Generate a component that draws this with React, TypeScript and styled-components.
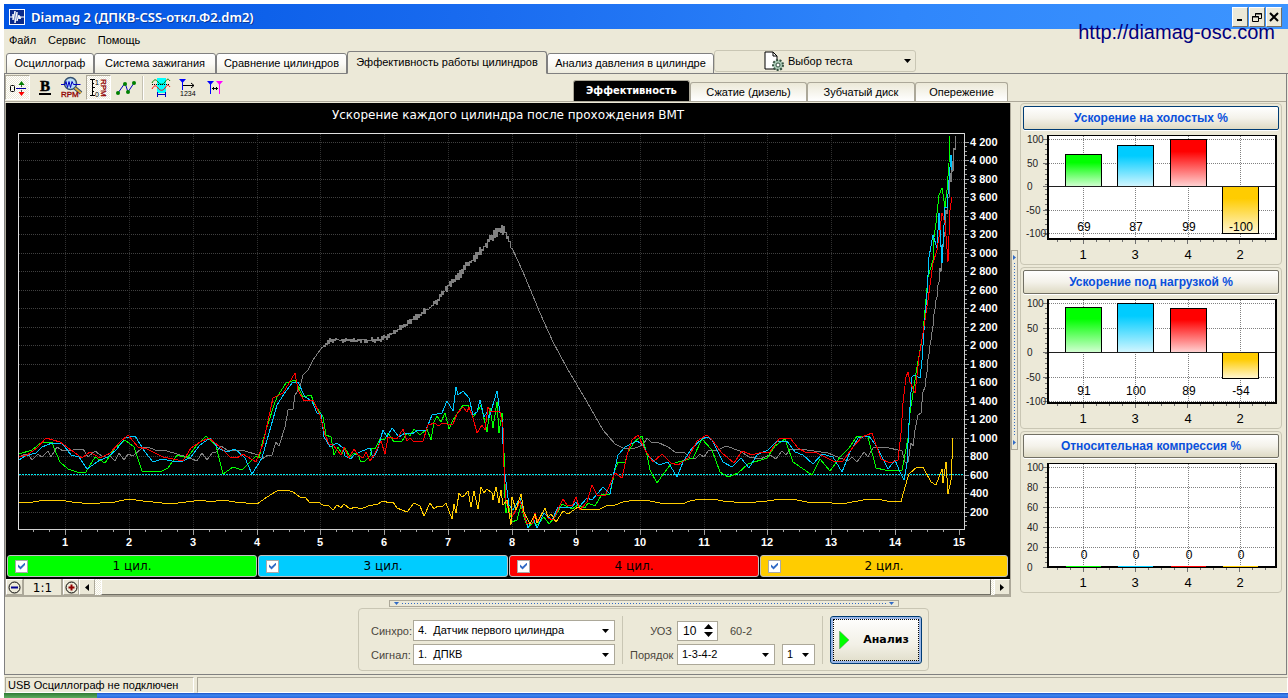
import React from "react";
import styled, { createGlobalStyle, css } from "styled-components";

const ui = `"Liberation Sans", Arial, sans-serif`;
const verdana = `"DejaVu Sans", Verdana, sans-serif`;
const face = "#ece9d8";
const edge = "#aca899";

const Global = createGlobalStyle`
  * { box-sizing: border-box; }
  body { margin: 0; background: #fff; font: 11px/14px ${ui}; color: #000; }
  button, select, input { font: inherit; color: inherit; margin: 0; padding: 0; border-radius: 0; }
`;

/* ---------- window frame ---------- */

const Frame = styled.div`
  position: relative;
  display: flex;
  flex-direction: column;
  min-height: calc(100vh - 4px);
  margin: 4px 0 0 4px;
  background: ${face};
`;

const TitleBar = styled.header`
  display: flex;
  align-items: center;
  gap: 6px;
  height: 25px;
  padding: 0 6px 0 5px;
  background: linear-gradient(90deg, #0054e3, #1a6cf0 38%, #2f86fb 70%, #3d95ff);
  color: #fff;
`;

const Caption = styled.h1`
  flex: 1;
  margin: 0;
  font: 600 13px/18px "Noto Sans", "Open Sans", sans-serif;
  text-shadow: 1px 1px 0 #0a3a9c;
`;

const WindowButtons = styled.div`
  display: flex;
  gap: 1px;
`;

const WindowButton = styled.button`
  display: grid;
  place-items: center;
  width: 16px;
  height: 20px;
  background: ${face};
  border: 1px solid;
  border-color: #fff #716f64 #716f64 #fff;
`;

const SiteLink = styled.a`
  position: absolute;
  top: 16px;
  right: 13px;
  font: 20px/24px ${ui};
  color: #000080;
  text-decoration: none;
`;

const MenuBar = styled.nav`
  display: flex;
  align-items: center;
  gap: 12px;
  height: 22px;
  padding-left: 5px;
`;

const MenuItem = styled.button`
  background: none;
  border: 0;
`;

/* ---------- tabs ---------- */

const TabRow = styled.div`
  display: flex;
  align-items: flex-end;
  height: 23px;
  padding-left: 2px;
  background: linear-gradient(#808080, #808080) bottom / 100% 1px no-repeat;
`;

const Tab = styled.button<{ $w: number; $on?: boolean }>`
  width: ${(p) => p.$w}px;
  height: ${(p) => (p.$on ? 23 : 21)}px;
  padding-bottom: 2px;
  background: ${(p) => (p.$on ? face : "linear-gradient(#fff, #fbfaf6 50%, #eceadc)")};
  border: 1px solid #808080;
  border-bottom-color: ${(p) => (p.$on ? face : "#808080")};
  border-radius: 3px 3px 0 0;
  white-space: nowrap;
`;

const TestPicker = styled.button`
  display: grid;
  grid-template-columns: 20px 1fr 8px;
  align-items: center;
  gap: 4px;
  width: 202px;
  height: 22px;
  margin-bottom: 2px;
  padding: 0 3px 0 49px;
  background: ${face};
  border: 1px solid #c9c6b4;
  border-radius: 3px;
  text-align: left;
`;

const Page = styled.main`
  flex: 1;
  display: flex;
  flex-direction: column;
  margin-right: 1px;
  border: 1px solid #808080;
  border-top: 0;
`;

const ToolStrip = styled.div`
  display: flex;
  align-items: flex-end;
  height: 28px;
  border-bottom: 1px solid ${edge};
`;

const Tools = styled.div`
  display: flex;
  align-items: center;
  gap: 2px;
  width: 568px;
  height: 27px;
`;

const ToolButton = styled.button<{ $on?: boolean }>`
  display: grid;
  place-items: center;
  width: 25px;
  height: 25px;
  border: 1px solid transparent;
  background: none;
  ${(p) =>
    p.$on &&
    css`
      background: repeating-conic-gradient(#fff 0 25%, ${face} 0 50%) 0 0 / 2px 2px;
      border-color: ${edge} #fff #fff ${edge};
    `}
`;

const ToolDivider = styled.span`
  width: 2px;
  height: 24px;
  margin: 0 2px;
  background: linear-gradient(90deg, #c5c2b2 50%, #fff 50%);
`;

const SubTab = styled.button<{ $w: number; $on?: boolean }>`
  width: ${(p) => p.$w}px;
  height: ${(p) => (p.$on ? 21 : 19)}px;
  background: ${(p) => (p.$on ? "#000" : "linear-gradient(#ece9d8, #fff)")};
  color: ${(p) => (p.$on ? "#fff" : "#000")};
  font: ${(p) => (p.$on ? `bold 11px/14px "DejaVu Sans Condensed", ${verdana}` : `11px/14px ${ui}`)};
  border: 1px solid ${edge};
  border-bottom: 0;
  border-radius: 3px 3px 0 0;
`;

/* ---------- workspace ---------- */

const Workspace = styled.div`
  display: grid;
  grid-template-columns: minmax(0, 1fr) 9px 262px;
  padding: 1px 4px 0 0;
`;

const Scope = styled.section`
  display: flex;
  flex-direction: column;
  border: solid ${edge};
  border-width: 0 1px 2px 1px;
`;

const ScopeBody = styled.div`
  background: #000;
  color: #fff;
`;

const ScopeTitle = styled.h2`
  margin: 0;
  padding: 4px 0 7px;
  font: 12px/16px ${verdana};
  text-align: center;
`;

const Plot = styled.svg`
  display: block;
  width: 100%;
  height: auto;
  font: bold 11px ${ui};
  fill: none;
`;

const Channels = styled.div`
  display: grid;
  grid-template-columns: repeat(3, 250fr) 248fr;
  gap: 1px;
  padding: 1px 2px 2px 1px;
`;

const Channel = styled.label<{ $c: string }>`
  display: grid;
  grid-template-columns: 13px 1fr 13px;
  align-items: center;
  height: 22px;
  padding: 0 7px;
  background: ${(p) => p.$c};
  border: 1px solid #c0c0c0;
  border-radius: 3px;
  color: #000;
  font: 12px/16px ${verdana};
  text-align: center;
`;

const Check = styled.input`
  appearance: none;
  display: grid;
  place-items: center;
  width: 13px;
  height: 13px;
  background: #fff;
  border: 1px solid #a9a9a9;
  &:checked::after {
    content: "";
    width: 7px;
    height: 7px;
    background: #316ac5;
    clip-path: polygon(0 28%, 36% 60%, 100% 0, 100% 36%, 36% 100%, 0 64%);
  }
`;

const ScrollRow = styled.div`
  display: flex;
  height: 16px;
`;

const RowButton = styled.button<{ $w: number }>`
  display: grid;
  place-items: center;
  width: ${(p) => p.$w}px;
  height: 16px;
  background: ${face};
  border: 1px solid;
  border-color: #fff #aca899 #aca899 #fff;
`;

const ZoomLabel = styled.output`
  width: 40px;
  padding-top: 2px;
  border-right: 2px solid ${edge};
  border-left: 1px solid ${edge};
  font: 12px/14px ${verdana};
  text-align: center;
`;

const Track = styled.div`
  flex: 1;
  padding: 0 3px 0 6px;
  background: repeating-conic-gradient(#fff 0 25%, ${face} 0 50%) 0 0 / 2px 2px;
`;

const Thumb = styled.div`
  height: 16px;
  background: ${face};
  border: 1px solid;
  border-color: #fff #716f64 #716f64 #fff;
`;

const VSplit = styled.div`
  align-self: center;
  display: flex;
  flex-direction: column;
  align-items: center;
  gap: 3px;
  width: 7px;
  height: 200px;
  padding: 4px 0;
  border: 1px solid ${edge};
`;

const HSplit = styled.div`
  display: flex;
  align-items: center;
  gap: 3px;
  width: 510px;
  height: 7px;
  padding: 0 4px;
  border: 1px solid ${edge};
`;

const DotsV = styled.span`
  flex: 1;
  width: 1px;
  background: repeating-linear-gradient(#316ac5 0 1px, transparent 1px 3px);
`;

const DotsH = styled.span`
  flex: 1;
  height: 1px;
  background: repeating-linear-gradient(90deg, #316ac5 0 1px, transparent 1px 3px);
`;

/* ---------- side charts ---------- */

const Side = styled.aside`
  display: flex;
  flex-direction: column;
  gap: 2px;
`;

const Card = styled.section`
  height: 162px;
  padding: 2px;
  border: 1px solid #c9c6b4;
  border-radius: 4px;
`;

const CardButton = styled.button<{ $active?: boolean }>`
  display: block;
  width: 100%;
  height: 24px;
  background: linear-gradient(#fff, #f4f2ea 50%, #dedac4);
  border: 1px solid ${(p) => (p.$active ? "#003c74" : "#716f64")};
  border-radius: 2px;
  box-shadow: 0 1px 0 #fff;
  color: #0a50dc;
  font: bold 12px/16px ${ui};
`;

const MiniPlot = styled.svg`
  display: block;
  width: 100%;
  height: auto;
  font-family: ${ui};
`;

/* ---------- lower panel ---------- */

const Lower = styled.div`
  flex: 1;
  display: flex;
  flex-direction: column;
  align-items: center;
  gap: 1px;
  padding: 3px 4px 3px 0;
`;

const Settings = styled.form`
  display: flex;
  gap: 7px;
  width: 571px;
  height: 63px;
  padding: 7px 0 0 12px;
  border: 1px solid #c9c6b4;
  border-radius: 4px;
`;

const Fields = styled.div<{ $cols: string }>`
  display: grid;
  grid-template-columns: ${(p) => p.$cols};
  grid-template-rows: 21px 21px;
  row-gap: 3px;
  margin-top: 4px;
`;

const FieldLabel = styled.label`
  align-self: center;
  color: #4a463c;
`;

const EndLabel = styled(FieldLabel)`
  padding-right: 5px;
  text-align: right;
`;

const Line = styled.span`
  display: flex;
  align-items: center;
  gap: 7px;
`;

const Rule = styled.span`
  width: 1px;
  height: 48px;
  background: #c9c6b4;
`;

const SelectBox = styled.span<{ $w: number }>`
  display: grid;
  width: ${(p) => p.$w}px;
  & > * { grid-area: 1 / 1; }
  & > svg { align-self: center; justify-self: end; margin-right: 6px; pointer-events: none; }
`;

const Select = styled.select`
  appearance: none;
  width: 100%;
  height: 21px;
  padding: 0 16px 2px 4px;
  background: #fff;
  border: 1px solid ${edge};
`;

const Spin = styled.span`
  display: flex;
  align-items: center;
  justify-content: space-between;
  width: 41px;
  height: 20px;
  margin-right: 5px;
  padding-right: 4px;
  background: #fff;
  border: 1px solid ${edge};
`;

const SpinInput = styled.input`
  width: 22px;
  padding-left: 5px;
  background: none;
  border: 0;
  font: 12px/14px ${ui};
`;

const Teeth = styled.span`
  color: #4a463c;
`;

const Analyse = styled.button`
  display: grid;
  grid-template-columns: 10px 1fr;
  align-items: center;
  justify-items: center;
  gap: 10px;
  width: 92px;
  height: 48px;
  padding: 0 8px;
  background: linear-gradient(#fff, #f2f0e6 60%, #e0ddc9);
  border: 1px solid #003c74;
  border-radius: 3px;
  box-shadow: inset 0 0 0 2px #9ab6e6;
  outline: 1px dotted #000;
  outline-offset: -4px;
  font: bold 11px/14px ${verdana};
`;

const StatusBar = styled.footer`
  display: flex;
  gap: 3px;
  height: 18px;
  padding: 2px 0 0 1px;
`;

const StatusCell = styled.div<{ $w?: number }>`
  flex: ${(p) => (p.$w ? `0 0 ${p.$w}px` : "1")};
  height: 16px;
  padding: 0 2px;
  border: 1px solid;
  border-color: ${edge} #fff #fff ${edge};
`;

const TaskStrip = styled.div`
  height: 5px;
  background:
    linear-gradient(#2f7a35, #5eac5f) 0 0 / 93px 100% no-repeat,
    linear-gradient(#1b50c4, #3d86ee 40%, #2a67e0);
`;

/* ---------- data ---------- */

const green =
  "19,454 32,450 42,442 52,442 54,448 60,462 68,469 77,472 86,472 95,457 105,463 115,448 125,440 134,447 142,471 160,472 168,468 177,455 187,458 197,445 206,436 216,446 223,474 233,467 242,470 256,456 259,458 263,440 274,405 277,397 286,383 295,380 303,397 311,395 315,405 323,417 326,435 331,437 334,455 338,447 342,454 345,448 350,457 354,453 358,455 361,462 365,461 370,456 372,448 375,449 380,439 385,439 388,433 394,442 402,441 407,433 410,436 414,429 420,435 427,429 431,440 434,422 437,416 441,422 445,413 449,429 453,420 457,414 463,405 468,405 473,417 477,412 481,405 487,432 490,408 493,428 497,402 499,433 502,413 504,453 504,483 506,513 508,503 512,522 517,520 521,505 524,517 528,528 533,522 537,525 544,517 549,524 555,517 562,504 572,509 578,505 585,508 588,503 595,506 602,494 610,494 615,470 618,462 625,462 628,452 635,441 642,436 647,455 650,470 657,483 664,473 671,464 693,458 702,439 712,450 720,472 728,477 738,473 748,464 767,458 775,446 785,439 793,462 812,475 820,459 830,471 840,457 849,448 857,436 868,437 876,468 885,470 902,470 904,460 908,438 910,413 915,380 917,367 923,333 925,310 928,277 933,260 934,237 936,223 939,195 942,188 945,207 947,190 949,163 950,136";
const cyan =
  "19,460 25,456 36,453 42,447 52,443 62,443 71,455 79,457 87,469 100,460 108,457 117,449 125,438 135,436 145,452 153,462 162,459 172,461 183,461 191,457 200,445 210,438 218,448 227,452 235,449 245,458 252,474 262,458 267,440 277,405 286,391 293,382 298,382 305,397 312,401 317,413 321,414 324,437 330,447 337,443 343,448 345,456 351,459 354,455 362,451 370,448 373,458 377,451 383,430 387,437 392,428 399,437 405,433 412,434 418,430 426,430 432,415 442,413 447,401 453,411 456,387 458,395 463,391 469,398 473,415 477,412 480,400 484,417 487,412 489,418 497,391 500,413 502,420 504,467 507,490 509,505 513,510 520,498 524,512 528,528 533,518 537,528 544,513 552,520 558,507 563,508 572,507 576,502 579,507 587,498 592,500 603,487 610,494 613,477 618,455 625,447 637,441 643,445 649,457 659,465 668,462 677,477 683,462 692,448 702,439 707,437 712,440 723,462 732,467 741,458 749,468 757,455 768,450 777,441 787,441 795,452 803,455 813,464 822,454 833,457 842,472 850,452 858,438 869,436 877,447 888,469 895,460 900,472 904,480 907,463 909,423 912,377 914,375 920,378 922,360 924,330 927,293 929,257 933,235 937,248 939,213 942,263 945,207 947,208 949,180 951,155 952,170";
const red =
  "19,457 27,455 37,448 46,438 60,442 82,458 90,452 100,458 110,453 120,442 128,435 138,447 147,449 163,457 183,461 191,448 200,442 209,438 220,447 230,457 237,458 243,454 256,462 263,444 273,398 283,393 295,373 298,390 304,401 313,400 320,415 325,435 329,444 333,445 341,455 344,447 349,458 354,449 358,455 363,458 366,452 370,461 374,455 381,441 385,454 388,437 397,439 403,429 407,441 410,438 413,441 423,441 428,425 435,423 438,426 443,423 447,424 453,424 457,414 463,407 467,412 469,407 473,418 477,433 482,425 485,430 488,407 490,411 500,412 503,427 504,467 506,500 509,512 512,517 517,508 520,501 527,524 533,523 535,513 538,522 545,508 548,518 553,520 563,499 567,505 572,506 576,497 580,510 587,502 592,485 597,495 605,496 615,473 622,478 627,455 632,440 638,435 645,450 653,462 662,454 671,463 678,465 688,458 697,441 707,435 713,441 722,453 734,463 742,451 752,455 762,452 770,452 779,439 790,438 798,448 807,453 815,452 835,462 843,461 853,447 862,437 872,433 881,459 890,463 898,460 901,433 903,403 906,377 908,372 910,382 915,393 919,357 923,333 928,300 933,263 937,250 940,230 942,213 945,223 948,262 950,210 952,197";
const yellow =
  "19,502 33,502 45,500 60,500 72,502 92,504 100,503 115,502 128,499 143,501 162,503 178,503 202,500 210,502 222,500 235,502 257,504 267,497 277,491 287,490 293,492 300,497 305,497 310,503 318,502 323,505 328,505 333,510 337,505 341,508 344,504 350,509 355,507 361,509 368,506 378,504 383,501 390,503 393,502 397,508 407,512 414,503 420,506 424,516 430,503 434,509 438,506 442,507 446,503 452,519 454,504 456,513 459,493 462,497 465,495 468,491 471,507 474,491 478,509 481,487 484,493 487,489 492,493 493,500 496,487 499,503 501,490 503,505 507,500 511,525 512,497 516,510 521,494 524,512 530,524 535,514 537,523 545,508 548,517 551,514 556,522 563,511 568,514 578,507 583,510 600,509 608,505 615,505 623,502 635,500 650,501 660,503 682,504 690,501 700,499 713,499 723,501 745,503 767,501 782,499 797,500 807,502 832,503 847,503 863,500 877,499 887,501 901,502 905,487 909,474 917,467 923,467 931,482 936,485 942,469 943,483 946,462 948,494 951,480 953,438";
const rpmStart =
  "19,457 25,454 28,454 32,460 38,454 42,457 48,451 51,457 57,447 63,451 83,449 88,457 95,451 103,457 108,454 115,461 119,453 124,460 128,454 133,456 142,448 148,447 155,450 167,451 187,457 197,461 202,453 207,460 213,452 216,452 221,446 227,450 245,451 258,455 262,459 268,455 272,455 276,442 279,446 285,427 288,410 293,409 295,395 300,387 303,375 308,370 313,360 320,350";
const rpmEnd =
  "512,248 523,272 540,313 553,342 567,368 587,402 603,430 615,444 623,448 635,448 643,445 647,438 652,443 657,442 668,447 675,452 685,453 690,458 695,459 700,454 704,457 708,451 718,450 726,446 740,451 749,457 760,459 770,455 776,459 782,451 786,455 790,449 807,450 828,453 840,458 848,461 852,457 857,462 864,452 868,457 873,448 885,447 902,451 905,462 908,462 911,443 913,446 915,430 918,415 921,413 923,392 925,387";
const rpmClimb: [number, number][] = [
  [925, 387], [928, 360], [932, 333], [935, 308], [939, 280], [942, 250], [946, 220], [948, 200], [950, 180], [953, 163], [955, 147], [956, 136],
];
const rpmRise: [number, number][] = [
  [320, 350], [323, 346], [330, 341], [340, 340], [378, 340], [387, 337], [403, 326], [420, 315], [437, 302], [448, 287], [462, 272], [475, 257], [490, 240], [502, 229], [505, 232], [512, 248],
];

/* Engine-speed trace carries an irregular ripple that widens with speed. */
function ripple(points: [number, number][], amp: (x: number) => number) {
  const out: string[] = [];
  for (let i = 1; i < points.length; i++) {
    const [x0, y0] = points[i - 1];
    const [x1, y1] = points[i];
    for (let x = x0; x < x1; x++) {
      const y = y0 + ((y1 - y0) * (x - x0)) / (x1 - x0);
      const noise = Math.abs((Math.sin(x * 12.9898) * 43758.5453) % 1);
      const wave = (x % 2 ? 1 : -1) * amp(x) * noise;
      out.push(`${x},${Math.round(y + wave)}`);
    }
  }
  out.push(points[points.length - 1].join(","));
  return out.join(" ");
}

const gray = [
  rpmStart,
  ripple(rpmRise, (x) => (x < 325 ? 1 : x < 400 ? 3 : x > 504 ? 3 : 3 + ((x - 400) / 105) * 4)),
  rpmEnd,
  ripple(rpmClimb, (x) => (x > 940 ? 12 : 3)),
].join(" ");

const xAt = (n: number) => Math.round(65 + (n - 1) * 63.86) + 0.5;
const yAt = (v: number) => Math.round(530 - v * 0.0925) + 0.5;
const range = (n: number, from = 0) => Array.from({ length: n }, (_, i) => i + from);
const spaced = (v: number) => (v >= 1000 ? `${Math.floor(v / 1000)} ${String(v % 1000).padStart(3, "0")}` : `${v}`);

function ScopePlot() {
  return (
    <Plot viewBox="6 130 1004 424" shapeRendering="crispEdges" role="img" aria-label="Ускорение каждого цилиндра">
      <g stroke="#404040" strokeDasharray="1 1">
        {range(21, 1).map((n) => <path key={n} d={`M19 ${yAt(n * 200)}H964`} />)}
      </g>
      <g stroke="#303030" strokeDasharray="1 1">
        {range(14, 1).map((n) => <path key={n} d={`M${xAt(n)} 134V529`} />)}
      </g>
      <path d="M18.500 529.500V133.500H964" stroke="#e0e0e0" />
      <path d="M18 529.500H964.500V133" stroke="#d0d0d0" />
      <g stroke="#a0a0a0">
        {range(59, 2).map((n) => {
          const x = Math.round(65 + (n - 4) * 15.965) + 0.5;
          return x < 964 && x > 19 ? <path key={n} d={`M${x} 530V${n % 4 ? 532 : 535}`} /> : null;
        })}
        {range(84, 1).map((n) => {
          const y = yAt(n * 50);
          return <path key={n} d={`M965 ${y}H${n % 4 ? 967 : 969}`} />;
        })}
      </g>
      <path d="M19 474.500H964" stroke="#00e8f0" strokeDasharray="2 1" />
      <polyline points={gray} stroke="#808080" />
      <polyline points={green} stroke="#00ff00" />
      <polyline points={cyan} stroke="#00c8ff" />
      <polyline points={red} stroke="#ff0000" />
      <polyline points={yellow} stroke="#ffcc00" />
      <g fill="#fff" textAnchor="middle">
        {range(15, 1).map((n) => <text key={n} x={xAt(n) - 0.5} y="546">{n}</text>)}
      </g>
      <g fill="#fff">
        {range(21, 1).map((n) => <text key={n} x="970" y={yAt(n * 200) + 3.5}>{spaced(n * 200)}</text>)}
      </g>
    </Plot>
  );
}

const channels = [
  { n: "1", color: "#00ff00" },
  { n: "3", color: "#00ccff" },
  { n: "4", color: "#ff0000" },
  { n: "2", color: "#ffcc00" },
];

const centers = [60, 112, 165, 217];

type MiniProps = { id: string; values: number[]; labels: number[]; top: number; base: number };

function Mini({ id, values, labels, top, base }: MiniProps) {
  const y = (v: number) => Math.round(base - (v * (base - top)) / 100);
  return (
    <MiniPlot viewBox="0 0 256 132" shapeRendering="crispEdges" role="img" aria-label={values.join(", ")}>
      <defs>
        {channels.map((c, i) => (
          <linearGradient key={i} id={`${id}${i}`} x1="0" y1="0" x2="0" y2="1.15">
            <stop offset="0.22" stopColor={c.color} />
            <stop offset="1" stopColor="#fff" />
          </linearGradient>
        ))}
      </defs>
      <rect x="24" y="5" width="230" height="105" fill="#fff" />
      <g stroke="#808080" strokeDasharray="1 1">
        {labels.map((l) => <path key={l} d={`M26 ${y(l)}.5H252`} />)}
        {centers.map((c) => <path key={c} d={`M${c}.5 6V108`} />)}
      </g>
      {values.map((v, i) =>
        v === 0 ? null : (
          <rect key={i} x={centers[i] - 17.5} width="36" y={Math.min(y(v), base) + 0.5} height={Math.abs(y(v) - base)} fill={`url(#${id}${i})`} stroke="#000" />
        ),
      )}
      <path d={`M25 ${base}.5H253`} stroke="#202020" />
      <path d="M24 5.500H254" stroke="#000" />
      <path d="M25 5V110M253 5V110M24 109H254" stroke="#000" strokeWidth="2" />
      {values.map((v, i) => (v === 0 ? <path key={i} d={`M${centers[i] - 17} 108.500h35`} stroke={channels[i].color} /> : null))}
      <g stroke="#707070">
        {range(17).map((n) => <path key={n} d={`M${34 + n * 13}.5 110v${n % 4 === 2 ? 4 : 2}`} />)}
        {labels.map((l) => <path key={l} d={`M20 ${y(l)}.5h4`} />)}
        {range(20).map((n) => <path key={n} d={`M22 ${9 + n * 5}.5h2`} />)}
      </g>
      <g fontSize="10" fill="#222">
        {labels.map((l) => <text key={l} x={l < 0 ? 3 : 4} y={y(l) + 4}>{l}</text>)}
      </g>
      <g fontSize="12" textAnchor="middle">
        {values.map((v, i) => <text key={i} x={centers[i] + 1} y="101">{v}</text>)}
      </g>
      <g fontSize="13" textAnchor="middle">
        {channels.map((c, i) => <text key={i} x={centers[i]} y="129">{c.n}</text>)}
      </g>
    </MiniPlot>
  );
}

/* ---------- icons ---------- */

const AppIcon = () => (
  <svg width="16" height="16" viewBox="0 0 16 16">
    <rect x="0.500" y="0.500" width="15" height="15" fill="#0a2a8a" stroke="#fff" />
    <path d="M1 8h3V5v6l2-9v12l2-11v9l2-6v4l1-3v3l1-2h3" fill="none" stroke="#fff" />
  </svg>
);

const Down = ({ w = 7 }: { w?: number }) => (
  <svg width={w} height="4" viewBox="0 0 7 4"><path d="M0 0h7L3.500 4z" /></svg>
);

const BlueDown = () => (
  <svg width="5" height="3" viewBox="0 0 5 3"><path d="M0 0h5L2.500 3z" fill="#316ac5" /></svg>
);

const BlueRight = () => (
  <svg width="3" height="5" viewBox="0 0 3 5"><path d="M0 0v5L3 2.500z" fill="#316ac5" /></svg>
);

const ZeroIcon = () => (
  <svg width="20" height="20" viewBox="0 0 20 20" fill="none">
    <rect x="2.500" y="7.500" width="4" height="6" rx="1" stroke="#000" />
    <path d="M8 10.500h10" stroke="#0000a0" />
    <path d="M13.500 4v5M13.500 12v4" stroke="#555" />
    <path d="M10.500 7l3-4 3 4z" fill="#008000" />
    <path d="M10.500 14l3 4 3-4z" fill="#f00" />
  </svg>
);

const BoldIcon = () => (
  <svg width="18" height="20" viewBox="0 0 18 20">
    <text x="9" y="13" textAnchor="middle" fontFamily="Liberation Serif, serif" fontWeight="bold" fontSize="15" stroke="#000" strokeWidth="0.500">B</text>
    <path d="M3 16h12" stroke="#000" strokeWidth="2" />
  </svg>
);

const LensIcon = () => (
  <svg width="23" height="23" viewBox="0 0 23 23" fill="none">
    <circle cx="10.500" cy="7.500" r="6" fill="#b8dcf8" stroke="#35506e" strokeWidth="1.500" />
    <path d="M15 12l6 5" stroke="#35506e" strokeWidth="4" />
    <path d="M15 12l6 5" stroke="#e0b040" strokeWidth="2" />
    <path d="M1 8.500h4l1-3 1.500 6 1.500-6 1.500 6 1.500-6 1.500 3h7" stroke="#0000c0" />
    <text x="1" y="21" fontFamily="Liberation Sans" fontSize="8" fill="#900000" stroke="#900000" strokeWidth="0.300">RPM</text>
  </svg>
);

const RpmScaleIcon = () => (
  <svg width="20" height="22" viewBox="0 0 20 22">
    <path d="M1 2.500h5M3.500 2v17M1 18.500h5M3 10.500h3M3 6.500h2M3 14.500h2" stroke="#000" fill="none" />
    <text x="6" y="8" fontFamily="Liberation Sans" fontSize="7">1</text>
    <text x="6" y="20" fontFamily="Liberation Sans" fontSize="7">0</text>
    <text transform="translate(12 2) rotate(90)" fontFamily="Liberation Sans" fontSize="8" fill="#900000" stroke="#900000" strokeWidth="0.300">RPM</text>
  </svg>
);

const DotsIcon = () => (
  <svg width="22" height="18" viewBox="0 0 22 18" fill="#008000">
    <path d="M3 14L10 4l3 9 6-9" fill="none" stroke="#0000c0" />
    <circle cx="3" cy="14" r="2" /><circle cx="10" cy="5" r="2" /><circle cx="13" cy="13" r="2" /><circle cx="19" cy="4" r="2" />
  </svg>
);

const BandIcon = () => (
  <svg width="20" height="20" viewBox="0 0 20 20" fill="none">
    <rect x="6" y="0" width="9" height="15" fill="#00ffff" />
    <path d="M1 5c2-4 4-4 6-1s5 3 7 0 3-4 5-1" stroke="#008000" />
    <path d="M1 11c2-4 4-4 6-1s5 3 7 0 3-4 5-1" stroke="#f00" />
    <path d="M1 6.500h18" stroke="#000" strokeDasharray="1 1" />
    <path d="M6 16.500h9M6.500 14v5M14.500 14v5" stroke="#0000c0" />
  </svg>
);

const CountIcon = () => (
  <svg width="20" height="20" viewBox="0 0 20 20" fill="none">
    <path d="M1 1h7L4.500 5z" fill="#00f" />
    <path d="M4.500 4v8" stroke="#00f" />
    <path d="M5 7.500h11M13 5l3 2.500-3 2.500" stroke="#000" />
    <text x="2" y="18" fontFamily="Liberation Sans" fontSize="7" fill="#000">1234</text>
  </svg>
);

const MarksIcon = () => (
  <svg width="18" height="18" viewBox="0 0 18 18" fill="none">
    <path d="M1 2h7l-3.500 4z" fill="#00f" /><path d="M4.500 5v10" stroke="#00f" />
    <path d="M10 2h7l-3.500 4z" fill="#f0f" /><path d="M13.500 5v10" stroke="#f0f" />
    <path d="M6 9.500h6M7.500 8v3M10.500 8v3" stroke="#000" />
  </svg>
);

const TestIcon = () => (
  <svg width="20" height="20" viewBox="0 0 20 20" fill="none">
    <path d="M1 1h8l4 4v13H1z" fill="#fff" stroke="#000" />
    <path d="M9 1v4h4" stroke="#000" />
    <circle cx="14" cy="14" r="5" fill="#a8c8b4" stroke="#35503f" strokeWidth="2" strokeDasharray="2 1.500" />
    <circle cx="14" cy="14" r="2" fill="#fff" stroke="#35503f" />
  </svg>
);

const ZoomGlyph = ({ plus }: { plus?: boolean }) => (
  <svg width="13" height="13" viewBox="0 0 13 13" fill="none">
    <circle cx="6.500" cy="6.500" r="5.500" stroke="#000" />
    <path d={plus ? "M3.500 6.500h6M6.500 3.500v6" : "M3 6.500h7"} stroke={plus ? "#900000" : "#000090"} strokeWidth="2" />
  </svg>
);

/* ---------- application ---------- */

export default function App() {
  return (
    <>
      <Global />
      <Frame>
        <TitleBar>
          <AppIcon />
          <Caption>Diamag 2 (ДПКВ-CSS-откл.Ф2.dm2)</Caption>
          <WindowButtons>
            <WindowButton aria-label="Свернуть">
              <svg width="10" height="10" viewBox="0 0 10 10"><path d="M2 8h5" stroke="#000" strokeWidth="2" /></svg>
            </WindowButton>
            <WindowButton aria-label="Восстановить">
              <svg width="10" height="10" viewBox="0 0 10 10" fill="none" stroke="#000">
                <path d="M3.500 4V1.500h6v5H7M3 2h7M.5 4.500h6v5h-6zM0 5h7" />
              </svg>
            </WindowButton>
            <WindowButton aria-label="Закрыть">
              <svg width="10" height="10" viewBox="0 0 10 10"><path d="M1 1l8 8M9 1L1 9" stroke="#000" strokeWidth="2" /></svg>
            </WindowButton>
          </WindowButtons>
        </TitleBar>
        <SiteLink href="http://diamag-osc.com">http://diamag-osc.com</SiteLink>
        <MenuBar>
          <MenuItem>Файл</MenuItem>
          <MenuItem>Сервис</MenuItem>
          <MenuItem>Помощь</MenuItem>
        </MenuBar>
        <TabRow>
          <Tab $w={88}>Осциллограф</Tab>
          <Tab $w={122}>Система зажигания</Tab>
          <Tab $w={131}>Сравнение цилиндров</Tab>
          <Tab $w={200} $on>Эффективность работы цилиндров</Tab>
          <Tab $w={167}>Анализ давления в цилиндре</Tab>
          <TestPicker>
            <TestIcon />
            Выбор теста
            <Down w={7} />
          </TestPicker>
        </TabRow>
        <Page>
          <ToolStrip>
            <Tools>
              <ToolButton $on aria-label="Ноль"><ZeroIcon /></ToolButton>
              <ToolButton aria-label="Толщина"><BoldIcon /></ToolButton>
              <ToolButton aria-label="Обороты"><LensIcon /></ToolButton>
              <ToolButton $on aria-label="Шкала"><RpmScaleIcon /></ToolButton>
              <ToolButton aria-label="Точки"><DotsIcon /></ToolButton>
              <ToolDivider />
              <ToolButton aria-label="Диапазон"><BandIcon /></ToolButton>
              <ToolButton aria-label="Нумерация"><CountIcon /></ToolButton>
              <ToolButton aria-label="Маркеры"><MarksIcon /></ToolButton>
            </Tools>
            <SubTab $w={117} $on>Эффективность</SubTab>
            <SubTab $w={117}>Сжатие (дизель)</SubTab>
            <SubTab $w={108}>Зубчатый диск</SubTab>
            <SubTab $w={93}>Опережение</SubTab>
          </ToolStrip>
          <Workspace>
            <Scope>
              <ScopeBody>
                <ScopeTitle>Ускорение каждого цилиндра после прохождения ВМТ</ScopeTitle>
                <ScopePlot />
                <Channels>
                  {channels.map((c) => (
                    <Channel key={c.n} $c={c.color}>
                      <Check type="checkbox" defaultChecked />
                      <span>{c.n} цил.</span>
                    </Channel>
                  ))}
                </Channels>
              </ScopeBody>
              <ScrollRow>
                <RowButton $w={17} aria-label="Уменьшить"><ZoomGlyph /></RowButton>
                <ZoomLabel>1:1</ZoomLabel>
                <RowButton $w={16} aria-label="Увеличить"><ZoomGlyph plus /></RowButton>
                <RowButton $w={16} aria-label="Влево">
                  <svg width="4" height="7" viewBox="0 0 4 7"><path d="M4 0v7L0 3.500z" /></svg>
                </RowButton>
                <Track><Thumb /></Track>
                <RowButton $w={16} aria-label="Вправо">
                  <svg width="4" height="7" viewBox="0 0 4 7"><path d="M0 0v7l4-3.500z" /></svg>
                </RowButton>
              </ScrollRow>
            </Scope>
            <VSplit>
              <BlueRight /><DotsV /><BlueRight />
            </VSplit>
            <Side>
              <Card>
                <CardButton $active>Ускорение на холостых %</CardButton>
                <Mini id="idle" values={[69, 87, 99, -100]} labels={[100, 50, 0, -50, -100]} top={9} base={56} />
              </Card>
              <Card>
                <CardButton>Ускорение под нагрузкой %</CardButton>
                <Mini id="load" values={[91, 100, 89, -54]} labels={[100, 50, 0, -50, -100]} top={9} base={58} />
              </Card>
              <Card>
                <CardButton>Относительная компрессия %</CardButton>
                <Mini id="comp" values={[0, 0, 0, 0]} labels={[100, 80, 60, 40, 20, 0]} top={9} base={109} />
              </Card>
            </Side>
          </Workspace>
          <Lower>
            <HSplit>
              <BlueDown /><DotsH /><BlueDown />
            </HSplit>
            <Settings onSubmit={(e) => e.preventDefault()}>
              <Fields $cols="42px 202px">
                <FieldLabel htmlFor="sync">Синхро:</FieldLabel>
                <SelectBox $w={202}>
                  <Select id="sync"><option>{"4.\u00a0 Датчик первого цилиндра"}</option></Select>
                  <Down />
                </SelectBox>
                <FieldLabel htmlFor="signal">Сигнал:</FieldLabel>
                <SelectBox $w={202}>
                  <Select id="signal"><option>{"1.\u00a0 ДПКВ"}</option></Select>
                  <Down />
                </SelectBox>
              </Fields>
              <Rule />
              <Fields $cols="47px 138px">
                <EndLabel htmlFor="angle">УОЗ</EndLabel>
                <Line>
                  <Spin>
                    <SpinInput id="angle" defaultValue="10" />
                    <svg width="9" height="13" viewBox="0 0 9 13"><path d="M0 5h9L4.500 0zM0 8h9l-4.500 5z" /></svg>
                  </Spin>
                  <Teeth>60-2</Teeth>
                </Line>
                <EndLabel htmlFor="order">Порядок</EndLabel>
                <Line>
                  <SelectBox $w={98}>
                    <Select id="order"><option>1-3-4-2</option></Select>
                    <Down />
                  </SelectBox>
                  <SelectBox $w={33}>
                    <Select aria-label="Первый цилиндр"><option>1</option></Select>
                    <Down />
                  </SelectBox>
                </Line>
              </Fields>
              <Rule />
              <Analyse type="submit">
                <svg width="10" height="18" viewBox="0 0 10 18"><path d="M0.500 0v18L10 9z" fill="#00ff00" stroke="#708070" strokeWidth="0.500" /></svg>
                Анализ
              </Analyse>
            </Settings>
          </Lower>
        </Page>
        <StatusBar>
          <StatusCell $w={189}>USB Осциллограф не подключен</StatusCell>
          <StatusCell />
        </StatusBar>
        <TaskStrip />
      </Frame>
    </>
  );
}
